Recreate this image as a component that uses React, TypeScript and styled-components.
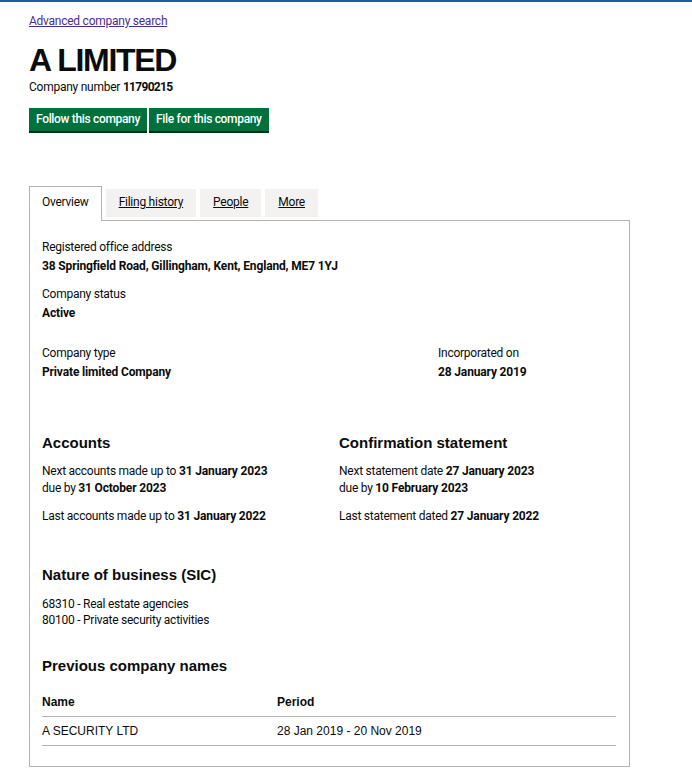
import React from "react";
import styled, { createGlobalStyle } from "styled-components";

const Global = createGlobalStyle`
  html, body { margin: 0; padding: 0; background: #ffffff; }
  body {
    font-family: Roboto, "Liberation Sans", Arial, sans-serif;
    color: #0b0c0c;
    letter-spacing: -0.25px;
  }
  b { letter-spacing: -0.15px; }
  * { box-sizing: border-box; }
`;

const TopBar = styled.div`
  height: 2px;
  background: #1d5ba4;
`;

const Page = styled.main`
  padding: 11px 0 0 29px;
  width: 630px;
`;

const BackLink = styled.a`
  display: block;
  width: max-content;
  font-size: 12px;
  line-height: 16px;
  color: #4c2c92;
  text-decoration: underline;
`;

const Title = styled.h1`
  margin: 13px 0 0;
  font-family: "Liberation Sans", Arial, sans-serif;
  font-size: 32px;
  line-height: 36px;
  font-weight: 700;
  letter-spacing: -1.3px;
`;

const CompanyNumber = styled.p`
  margin: 1px 0 0;
  font-size: 12px;
  line-height: 16px;
  b { font-weight: 700; letter-spacing: -0.7px; }
`;

const ButtonRow = styled.div`
  display: flex;
  gap: 2px;
  margin-top: 13px;
`;

const Button = styled.a`
  display: block;
  height: 25px;
  padding: 0 7px;
  background: #00703c;
  box-shadow: inset 0 -2px 0 #002d18;
  color: #ffffff;
  font-size: 12px;
  font-weight: 500;
  letter-spacing: -0.33px;
  line-height: 23px;
  text-decoration: none;
`;

const TabList = styled.ul`
  list-style: none;
  margin: 53px 0 0;
  padding: 0;
  display: flex;
  align-items: flex-end;
  position: relative;
  z-index: 1;
`;

const Tab = styled.li<{ $active?: boolean }>`
  margin-right: 4px;
  padding: 0 ${(p) => (p.$active ? "12px" : "13px")};
  font-size: 12px;
  height: ${(p) => (p.$active ? "35px" : "28px")};
  line-height: ${(p) => (p.$active ? "31px" : "26px")};
  margin-bottom: ${(p) => (p.$active ? "0" : "4px")};
  background: ${(p) => (p.$active ? "#ffffff" : "#f3f2f1")};
  border: ${(p) => (p.$active ? "1px solid #b1b4b6" : "none")};
  border-bottom: none;
  a {
    color: #0b0c0c;
    text-decoration: ${(p) => (p.$active ? "none" : "underline")};
  }
`;

const Panel = styled.section`
  margin-top: -1px;
  width: 601px;
  border: 1px solid #b1b4b6;
  padding: 18px 13px 20px 12px;
`;

const Field = styled.div<{ $gap?: number; $col?: number }>`
  margin-top: ${(p) => p.$gap ?? 0}px;
  grid-column: ${(p) => p.$col ?? "auto"};
`;

const Label = styled.div`
  font-size: 12px;
  line-height: 16px;
`;

const Value = styled.div`
  margin-top: 3px;
  font-size: 12px;
  line-height: 16px;
  font-weight: 700;
  letter-spacing: -0.15px;
`;

const ThreeCols = styled.div`
  display: grid;
  grid-template-columns: repeat(3, 1fr);
  column-gap: 20px;
  margin-top: 24px;
`;

const TwoCols = styled.div`
  display: grid;
  grid-template-columns: 1fr 1fr;
  column-gap: 20px;
  margin-top: 53px;
`;

const Heading = styled.h2<{ $gap?: number }>`
  margin: ${(p) => p.$gap ?? 0}px 0 0;
  font-family: "Liberation Sans", Arial, sans-serif;
  font-size: 15px;
  line-height: 20px;
  font-weight: 700;
  letter-spacing: 0;
`;

const Para = styled.p<{ $gap?: number }>`
  margin: ${(p) => p.$gap ?? 0}px 0 0;
  font-size: 12px;
  line-height: 17px;
  b { font-weight: 700; }
`;

const SicList = styled.ul`
  list-style: none;
  margin: 11px 0 0;
  padding: 0;
  font-size: 12px;
  line-height: 16px;
`;

const Table = styled.table`
  width: 100%;
  margin-top: 8px;
  border-collapse: collapse;
  font-family: "Liberation Sans", Arial, sans-serif;
  font-size: 12px;
  line-height: 16px;
  letter-spacing: 0;
`;

const Th = styled.th<{ $w?: number }>`
  text-align: left;
  font-weight: 700;
  padding: 10px 0 6px;
  width: ${(p) => (p.$w ? `${p.$w}px` : "auto")};
  border-bottom: 1px solid #b1b4b6;
`;

const Td = styled.td`
  padding: 6px 0 6px;
  border-bottom: 1px solid #b1b4b6;
`;

export default function App() {
  return (
    <>
      <Global />
      <TopBar />
      <Page>
        <BackLink href="#">Advanced company search</BackLink>
        <Title>A LIMITED</Title>
        <CompanyNumber>
          Company number <b>11790215</b>
        </CompanyNumber>
        <ButtonRow>
          <Button href="#">Follow this company</Button>
          <Button href="#">File for this company</Button>
        </ButtonRow>

        <TabList>
          <Tab $active>
            <a>Overview</a>
          </Tab>
          <Tab>
            <a href="#">Filing history</a>
          </Tab>
          <Tab>
            <a href="#">People</a>
          </Tab>
          <Tab>
            <a href="#">More</a>
          </Tab>
        </TabList>

        <Panel>
          <Field>
            <Label>Registered office address</Label>
            <Value>38 Springfield Road, Gillingham, Kent, England, ME7 1YJ</Value>
          </Field>
          <Field $gap={12}>
            <Label>Company status</Label>
            <Value>Active</Value>
          </Field>

          <ThreeCols>
            <Field>
              <Label>Company type</Label>
              <Value>Private limited Company</Value>
            </Field>
            <Field $col={3}>
              <Label>Incorporated on</Label>
              <Value>28 January 2019</Value>
            </Field>
          </ThreeCols>

          <TwoCols>
            <div>
              <Heading>Accounts</Heading>
              <Para $gap={10}>
                Next accounts made up to <b>31 January 2023</b>
                <br />
                due by <b>31 October 2023</b>
              </Para>
              <Para $gap={11}>
                Last accounts made up to <b>31 January 2022</b>
              </Para>
            </div>
            <div>
              <Heading>Confirmation statement</Heading>
              <Para $gap={10}>
                Next statement date <b>27 January 2023</b>
                <br />
                due by <b>10 February 2023</b>
              </Para>
              <Para $gap={11}>
                Last statement dated <b>27 January 2022</b>
              </Para>
            </div>
          </TwoCols>

          <Heading $gap={40}>Nature of business (SIC)</Heading>
          <SicList>
            <li>68310 - Real estate agencies</li>
            <li>80100 - Private security activities</li>
          </SicList>

          <Heading $gap={28}>Previous company names</Heading>
          <Table>
            <thead>
              <tr>
                <Th $w={235}>Name</Th>
                <Th>Period</Th>
              </tr>
            </thead>
            <tbody>
              <tr>
                <Td>A SECURITY LTD</Td>
                <Td>28 Jan 2019 - 20 Nov 2019</Td>
              </tr>
            </tbody>
          </Table>
        </Panel>
      </Page>
    </>
  );
}
